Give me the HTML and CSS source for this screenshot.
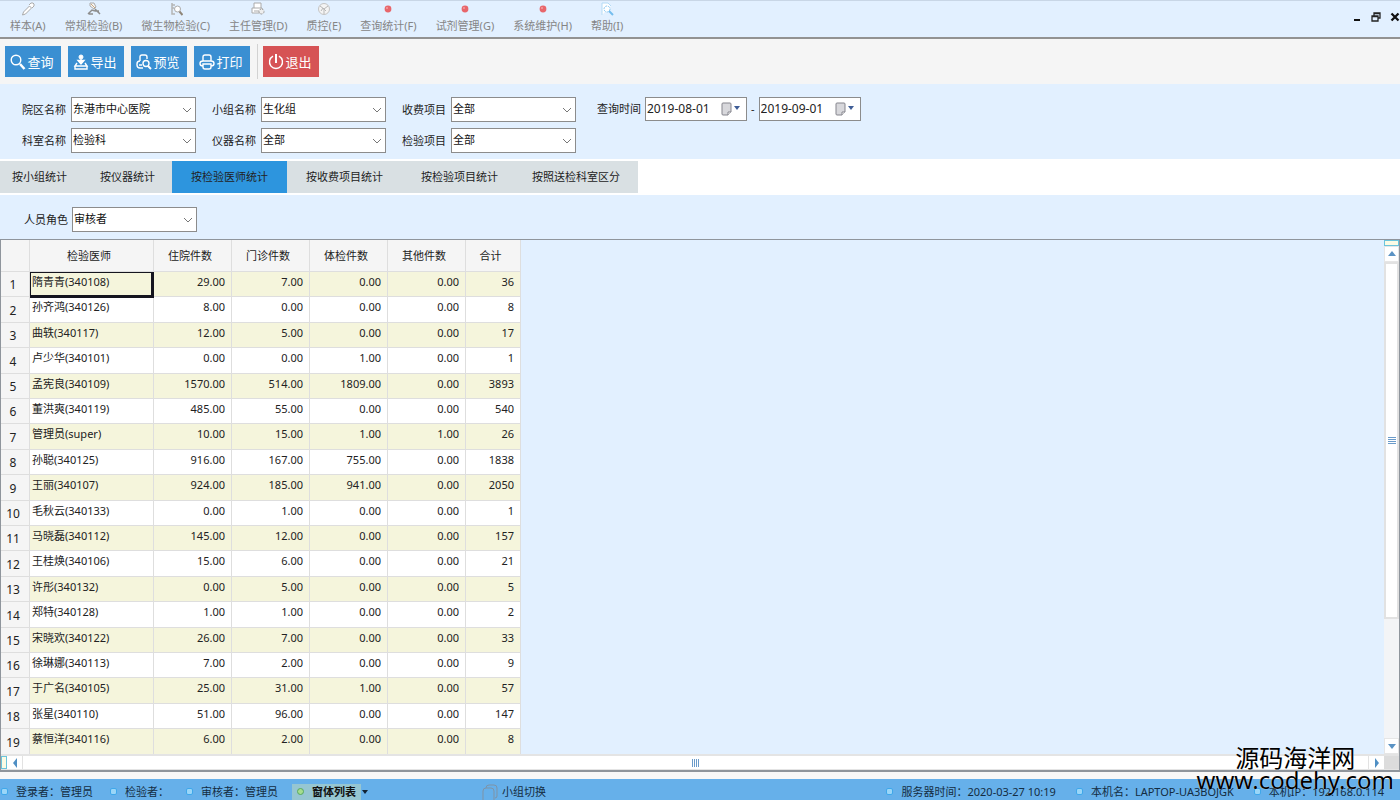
FILE: index.html
```html
<!DOCTYPE html>
<html lang="zh-CN">
<head>
<meta charset="utf-8">
<title>按检验医师统计</title>
<link rel="stylesheet" href="styles.css">
</head>
<body>
<header class="menubar">
  <nav class="menu">
    <button class="menu-item"><svg class="menu-icon" viewBox="0 0 14 14"><path d="M1.500 13l1-3 6-6 2 2-6 6zM8 3l2-2h2l1 1v2l-2 2" fill="#fff" stroke="#aaa"/></svg>样本(A)</button>
    <button class="menu-item"><svg class="menu-icon" viewBox="0 0 14 14"><path d="M3 1h4l2 4-2 2-4-3z" fill="#f6f6f6" stroke="#aaa"/><path d="M1 12l4-4 3 1M2 12h4M8 7l5 5M8 9h4" fill="none" stroke="#8d8d8d" stroke-width="1.500"/><path d="M4 2l4 4" stroke="#c9a77d"/></svg>常规检验(B)</button>
    <button class="menu-item"><svg class="menu-icon" viewBox="0 0 14 14"><path d="M3 1v11h3M3 3h3M3 6h2" fill="none" stroke="#b4b4b4" stroke-width="1.500"/><circle cx="8.500" cy="7" r="3" fill="#fff" stroke="#aaa"/><path d="M10.500 9.500l3 3.500" stroke="#8f8578" stroke-width="2"/></svg>微生物检验(C)</button>
    <button class="menu-item"><svg class="menu-icon" viewBox="0 0 14 14"><path d="M3 6V1h7v5M1 6h10v5H1zM3 9h5" fill="#fff" stroke="#aaa"/><circle cx="10.500" cy="9.500" r="2.500" fill="#eee" stroke="#999" stroke-dasharray="2 1"/></svg>主任管理(D)</button>
    <button class="menu-item"><svg class="menu-icon" viewBox="0 0 14 14"><circle cx="7" cy="7" r="5.500" fill="#f4f4f4" stroke="#c4c4c4"/><path d="M3 4l4 3 4-3M7 7v5M4 9l2-3 3 3" fill="none" stroke="#b8b8b8"/></svg>质控(E)</button>
    <button class="menu-item"><svg class="menu-icon" viewBox="0 0 14 14"><circle cx="7" cy="7" r="3.400" fill="#e8666b"/><circle cx="6" cy="6" r="1" fill="#f3a0a0"/></svg>查询统计(F)</button>
    <button class="menu-item"><svg class="menu-icon" viewBox="0 0 14 14"><circle cx="7" cy="7" r="3.400" fill="#e8666b"/><circle cx="6" cy="6" r="1" fill="#f3a0a0"/></svg>试剂管理(G)</button>
    <button class="menu-item"><svg class="menu-icon" viewBox="0 0 14 14"><circle cx="7" cy="7" r="3.400" fill="#e8666b"/><circle cx="6" cy="6" r="1" fill="#f3a0a0"/></svg>系统维护(H)</button>
    <button class="menu-item"><svg class="menu-icon" viewBox="0 0 14 14"><path d="M2 13V1h6l3 3" fill="#fff" stroke="#b4dbf5"/><circle cx="7" cy="7" r="3" fill="#fff" stroke="#8ac8f0" stroke-dasharray="2 1"/><path d="M9 9l4 4" stroke="#74bdee" stroke-width="2"/></svg>帮助(I)</button>
  </nav>
  <div class="window-controls">
    <button class="win-btn" aria-label="最小化"><svg viewBox="0 0 10 10"><path d="M2 8h6" stroke="#111" stroke-width="2"/></svg></button>
    <button class="win-btn" aria-label="还原"><svg viewBox="0 0 10 10"><path d="M3 3.500V1h6v5H7M3 1.500h6M1 4h6v5H1zM1 4.500h6" fill="none" stroke="#222" stroke-width="1.300"/></svg></button>
    <button class="win-btn" aria-label="关闭"><svg viewBox="0 0 10 10"><path d="M1.500 1.500l7 7M8.500 1.500l-7 7" stroke="#111" stroke-width="2.300"/></svg></button>
  </div>
</header>

<div class="toolbar">
  <button class="tool"><svg class="tool-icon" viewBox="0 0 16 16"><circle cx="6" cy="6" r="4.800"/><path d="M10 10l4.500 5" stroke-width="2.500"/></svg>查询</button>
  <button class="tool"><svg class="tool-icon" viewBox="0 0 16 16"><circle cx="8" cy="3" r="2" fill="#fff" stroke-width="1"/><path d="M8 5v5M5 6.500h6L8 10z" fill="#fff"/><path d="M4 9l-2 3h12l-2-3M2 12v3h12v-3z"/></svg>导出</button>
  <button class="tool"><svg class="tool-icon" viewBox="0 0 16 16"><path d="M4 7V3q0-2 2-2h3q2 0 2 2v2M4 7Q1 7 1 10v1q0 3 3 3h3M3 11h3"/><circle cx="10" cy="9.500" r="3"/><path d="M12 12l3 3" stroke-width="2"/></svg>预览</button>
  <button class="tool"><svg class="tool-icon" viewBox="0 0 16 16"><path d="M4 7V3q0-2 2-2h4q2 0 2 2v4M4 12q-3 0-3-2.500T4 7h8q3 0 3 2.500T12 12M4 10h8v3q0 2-2 2H6q-2 0-2-2z"/></svg>打印</button>
  <span class="tool-sep"></span>
  <button class="tool tool-exit"><svg class="tool-icon" viewBox="0 0 16 16"><path d="M5 2.200a6.500 6.500 0 1 0 6 0"/><path d="M8 0v9" stroke-width="2"/></svg>退出</button>
</div>

<form class="filters">
  <div class="field-grid">
    <div class="field"><label for="f1">院区名称</label><span class="combo"><select id="f1"><option>东港市中心医院</option></select><svg class="chev" viewBox="0 0 10 6"><path d="M1 1l4 4 4-4"/></svg></span></div>
    <div class="field"><label for="f2">小组名称</label><span class="combo"><select id="f2"><option>生化组</option></select><svg class="chev" viewBox="0 0 10 6"><path d="M1 1l4 4 4-4"/></svg></span></div>
    <div class="field"><label for="f3">收费项目</label><span class="combo"><select id="f3"><option>全部</option></select><svg class="chev" viewBox="0 0 10 6"><path d="M1 1l4 4 4-4"/></svg></span></div>
    <div class="field"><label for="f4">科室名称</label><span class="combo"><select id="f4"><option>检验科</option></select><svg class="chev" viewBox="0 0 10 6"><path d="M1 1l4 4 4-4"/></svg></span></div>
    <div class="field"><label for="f5">仪器名称</label><span class="combo"><select id="f5"><option>全部</option></select><svg class="chev" viewBox="0 0 10 6"><path d="M1 1l4 4 4-4"/></svg></span></div>
    <div class="field"><label for="f6">检验项目</label><span class="combo"><select id="f6"><option>全部</option></select><svg class="chev" viewBox="0 0 10 6"><path d="M1 1l4 4 4-4"/></svg></span></div>
  </div>
  <div class="dates">
    <label for="d1">查询时间</label>
    <span class="date"><input id="d1" type="text" value="2019-08-01"><button type="button" class="date-btn" aria-label="选择开始日期"><svg viewBox="0 0 22 14"><path d="M3 1h7q1 0 1 1v8l-3 3H3q-1 0-1-1V2q0-1 1-1z" fill="#d8d8dc" stroke="#85858d"/><path d="M11 10H8v3" fill="#fff" stroke="#85858d"/><path d="M14 4h6l-3 4z" fill="#3f5d96"/></svg></button></span>
    <span class="dash">-</span>
    <span class="date"><input id="d2" type="text" value="2019-09-01" aria-label="结束日期"><button type="button" class="date-btn" aria-label="选择结束日期"><svg viewBox="0 0 22 14"><path d="M3 1h7q1 0 1 1v8l-3 3H3q-1 0-1-1V2q0-1 1-1z" fill="#d8d8dc" stroke="#85858d"/><path d="M11 10H8v3" fill="#fff" stroke="#85858d"/><path d="M14 4h6l-3 4z" fill="#3f5d96"/></svg></button></span>
  </div>
</form>

<nav class="tabs">
  <button class="tab tab-first">按小组统计</button>
  <button class="tab">按仪器统计</button>
  <button class="tab tab-wide tab-active">按检验医师统计</button>
  <button class="tab tab-wide">按收费项目统计</button>
  <button class="tab tab-wide">按检验项目统计</button>
  <button class="tab tab-last">按照送检科室区分</button>
</nav>

<div class="role">
  <label for="role">人员角色</label><span class="combo"><select id="role"><option>审核者</option></select><svg class="chev" viewBox="0 0 10 6"><path d="M1 1l4 4 4-4"/></svg></span>
</div>

<main class="sheet">
  <div class="sheet-body">
    <div class="sheet-view">
      <table class="grid">
        <colgroup><col class="c-no"><col class="c-name"><col class="c-num"><col class="c-num"><col class="c-num"><col class="c-num"><col class="c-sum"></colgroup>
        <thead><tr><th></th><th>检验医师</th><th>住院件数</th><th>门诊件数</th><th>体检件数</th><th>其他件数</th><th>合计</th></tr></thead>
        <tbody>
          <tr><th>1</th><td class="selected">隋青青(340108)</td><td>29.00</td><td>7.00</td><td>0.00</td><td>0.00</td><td>36</td></tr>
          <tr><th>2</th><td>孙齐鸿(340126)</td><td>8.00</td><td>0.00</td><td>0.00</td><td>0.00</td><td>8</td></tr>
          <tr><th>3</th><td>曲轶(340117)</td><td>12.00</td><td>5.00</td><td>0.00</td><td>0.00</td><td>17</td></tr>
          <tr><th>4</th><td>卢少华(340101)</td><td>0.00</td><td>0.00</td><td>1.00</td><td>0.00</td><td>1</td></tr>
          <tr><th>5</th><td>孟宪良(340109)</td><td>1570.00</td><td>514.00</td><td>1809.00</td><td>0.00</td><td>3893</td></tr>
          <tr><th>6</th><td>董洪爽(340119)</td><td>485.00</td><td>55.00</td><td>0.00</td><td>0.00</td><td>540</td></tr>
          <tr><th>7</th><td>管理员(super)</td><td>10.00</td><td>15.00</td><td>1.00</td><td>1.00</td><td>26</td></tr>
          <tr><th>8</th><td>孙聪(340125)</td><td>916.00</td><td>167.00</td><td>755.00</td><td>0.00</td><td>1838</td></tr>
          <tr><th>9</th><td>王丽(340107)</td><td>924.00</td><td>185.00</td><td>941.00</td><td>0.00</td><td>2050</td></tr>
          <tr><th>10</th><td>毛秋云(340133)</td><td>0.00</td><td>1.00</td><td>0.00</td><td>0.00</td><td>1</td></tr>
          <tr><th>11</th><td>马晓磊(340112)</td><td>145.00</td><td>12.00</td><td>0.00</td><td>0.00</td><td>157</td></tr>
          <tr><th>12</th><td>王桂焕(340106)</td><td>15.00</td><td>6.00</td><td>0.00</td><td>0.00</td><td>21</td></tr>
          <tr><th>13</th><td>许彤(340132)</td><td>0.00</td><td>5.00</td><td>0.00</td><td>0.00</td><td>5</td></tr>
          <tr><th>14</th><td>郑特(340128)</td><td>1.00</td><td>1.00</td><td>0.00</td><td>0.00</td><td>2</td></tr>
          <tr><th>15</th><td>宋晓欢(340122)</td><td>26.00</td><td>7.00</td><td>0.00</td><td>0.00</td><td>33</td></tr>
          <tr><th>16</th><td>徐琳娜(340113)</td><td>7.00</td><td>2.00</td><td>0.00</td><td>0.00</td><td>9</td></tr>
          <tr><th>17</th><td>于广名(340105)</td><td>25.00</td><td>31.00</td><td>1.00</td><td>0.00</td><td>57</td></tr>
          <tr><th>18</th><td>张星(340110)</td><td>51.00</td><td>96.00</td><td>0.00</td><td>0.00</td><td>147</td></tr>
          <tr><th>19</th><td>蔡恒洋(340116)</td><td>6.00</td><td>2.00</td><td>0.00</td><td>0.00</td><td>8</td></tr>
        </tbody>
      </table>
    </div>
    <div class="vscroll">
      <span class="split-v"></span>
      <button class="arrow-v" aria-label="向上"><svg viewBox="0 0 8 6"><path d="M0 5l4-5 4 5z" fill="#5b93c4"/></svg></button>
      <div class="track-v"><div class="thumb-v"><svg class="grip" viewBox="0 0 8 8"><path d="M0 0.500h8M0 2.500h8M0 4.500h8M0 6.500h8" stroke="#6a9bca"/></svg></div></div>
      <button class="arrow-v" aria-label="向下"><svg viewBox="0 0 8 6"><path d="M0 1l4 5 4-5z" fill="#5b93c4"/></svg></button>
    </div>
  </div>
  <div class="hscroll">
    <span class="split-h"></span>
    <button class="arrow-h" aria-label="向左"><svg viewBox="0 0 6 10"><path d="M5 0L1 5l4 5z" fill="#4f8fc4"/></svg></button>
    <div class="thumb-h"><svg class="grip" viewBox="0 0 8 8"><path d="M0.500 0v8M2.500 0v8M4.500 0v8M6.500 0v8" stroke="#6a9bca"/></svg></div>
    <button class="arrow-h" aria-label="向右"><svg viewBox="0 0 6 10"><path d="M1 0l4 5-4 5z" fill="#4f8fc4"/></svg></button>
    <span class="corner"></span>
  </div>
</main>

<footer class="statusbar">
  <div class="status-left">
    <span class="status"><i class="dot"></i>登录者：管理员</span>
    <span class="status"><i class="dot"></i>检验者：</span>
    <span class="status"><i class="dot"></i>审核者：管理员</span>
  </div>
  <button class="forms"><i class="dot dot-green"></i>窗体列表</button>
  <svg class="caret" viewBox="0 0 6 4"><path d="M0 0h6L3 4z" fill="#123"/></svg>
  <button class="switch"><svg class="switch-icon" viewBox="0 0 16 16"><path d="M4 4q0-3 3-3h5q3 0 3 3v8q0 2-2 2M1 16V7q0-3 3-3h5q3 0 3 3v9" fill="none" stroke="#7f93a6"/></svg>小组切换</button>
  <div class="status-right">
    <span class="status"><i class="dot"></i>服务器时间：2020-03-27 10:19</span>
    <span class="status"><i class="dot"></i>本机名：LAPTOP-UA3BOJGK</span>
    <span class="status"><i class="dot"></i>本机IP：192.168.0.114</span>
  </div>
</footer>

<div class="watermark"><span>源码海洋网</span><span>www.codehy.com</span></div>
</body>
</html>
```

FILE: styles.css
```css
* { box-sizing: border-box; }

body {
  margin: 0;
  height: 100vh;
  display: flex;
  flex-direction: column;
  overflow: hidden;
  background: #fff;
  color: #222;
  font: 11px/16px "Noto Sans", "Noto Sans CJK SC", sans-serif;
}

button, select, input { font: inherit; color: inherit; }
button { margin: 0; padding: 0; border: 0; background: none; }
svg { display: block; flex: none; }

/* menu bar */
.menubar {
  display: flex;
  justify-content: space-between;
  height: 39px;
  border-top: 1px solid #c8d6e6;
  border-bottom: 2px solid #929292;
  background: #e2f0ff;
}
.menu { display: flex; gap: 19px; padding-left: 10px; }
.menu-item {
  display: flex;
  flex-direction: column;
  align-items: center;
  gap: 2px;
  padding-top: 1px;
  color: #858585;
  white-space: nowrap;
}
.menu-icon { width: 14px; height: 14px; }
.window-controls { display: flex; align-items: flex-start; gap: 9px; padding-top: 11px; }
.win-btn { width: 10px; }
.win-btn svg { width: 10px; height: 10px; }

/* toolbar */
.toolbar {
  display: flex;
  align-items: center;
  gap: 7px;
  height: 45px;
  padding-left: 5px;
  background: #f5f5f5;
}
.tool {
  display: flex;
  align-items: center;
  justify-content: center;
  gap: 1px;
  width: 56px;
  height: 31px;
  padding-right: 2px;
  background: #3a8fd2;
  color: #fff;
  font-size: 13px;
}
.tool-icon { width: 16px; height: 16px; fill: none; stroke: #fff; stroke-width: 1.4; }
.tool-sep { width: 1px; height: 35px; margin-right: -2px; background: #d2d2d2; }
.tool-exit { background: #d65355; }

/* filters */
.filters {
  display: flex;
  gap: 21px;
  padding: 13px 22px 6px;
  background: #e2f0ff;
}
.field-grid {
  display: grid;
  grid-template-columns: repeat(3, max-content);
  gap: 6px 16px;
}
.field { display: flex; align-items: center; gap: 5px; }
.combo { display: grid; align-items: center; width: 125px; }
.combo select {
  grid-area: 1 / 1;
  width: 100%;
  height: 25px;
  padding: 0 0 1px 1px;
  appearance: none;
  border: 1px solid #8c8c8c;
  border-radius: 0;
  background: #fff;
  color: #111;
}
.chev {
  grid-area: 1 / 1;
  justify-self: end;
  width: 10px;
  height: 6px;
  margin-right: 4px;
  fill: none;
  stroke: #777;
  pointer-events: none;
}
.dates { display: flex; align-items: center; align-self: flex-start; height: 24px; }
.date {
  display: flex;
  align-items: center;
  width: 102px;
  height: 24px;
  margin-left: 4px;
  border: 1px solid #8c8c8c;
  background: #fff;
  font-size: 12px;
}
.date input { width: 74px; padding: 0 0 0 1px; border: 0; background: none; outline: 0; }
.date-btn svg { width: 22px; height: 14px; }
.dash { margin-left: 4px; }

/* tabs */
.tabs { display: flex; padding: 2px 0; background: #fff; }
.tab { height: 32px; padding: 0 17px; background: #d9e0e3; white-space: nowrap; }
.tab-first { padding: 0 16px 0 12px; }
.tab-wide { padding: 0 19px; }
.tab-last { padding: 0 18px 0 15px; }
.tab-active { background: #2d95de; }

.role {
  display: flex;
  align-items: center;
  gap: 4px;
  height: 44px;
  padding: 5px 0 0 24px;
  background: #e2f0ff;
}

/* result sheet */
.sheet {
  display: flex;
  flex: 1;
  flex-direction: column;
  min-height: 0;
  border: solid #8f959c;
  border-width: 1px 1px 2px;
  background: #e2f0ff;
}
.sheet-body { display: flex; flex: 1; min-height: 0; }
.sheet-view { flex: 1; overflow: hidden; }
.grid { width: 520px; table-layout: fixed; border-collapse: separate; border-spacing: 0; background: #fff; }
.c-no { width: 29px; }
.c-name { width: 124px; }
.c-num { width: 78px; }
.c-sum { width: 55px; }
.grid th, .grid td { border: solid #dedede; border-width: 0 1px 1px 0; font-weight: 400; }
.grid thead th { height: 32px; padding: 0 5px 0 0; background: #f5f5f5; }
.grid tbody th { padding: 2px 4px 0 0; background: #f5f5f5; font-size: 12px; line-height: 16px; }
.grid tbody td { padding: 2px 6px 0 0; text-align: right; vertical-align: top; white-space: nowrap; }
.grid tbody td:nth-child(2) { padding-left: 2px; text-align: left; }
.grid tbody tr { height: 25px; }
.grid tbody tr:nth-child(5n+2), .grid tbody tr:nth-child(5n+4) { height: 26px; }
.grid tbody tr:nth-child(odd) { background: #f5f5dc; }
.selected { position: relative; }
.selected::after {
  content: "";
  position: absolute;
  inset: 0 -1px -2px 0;
  border: solid #15151f;
  border-width: 1px 3px 3px 1px;
}

/* scroll bars */
.vscroll { display: flex; flex-direction: column; width: 15px; background: #f3f4f6; }
.split-v { height: 6px; border: 1px solid #6cc4dc; background: #fbfbe4; }
.arrow-v { display: grid; place-items: center; height: 16px; border: 1px solid #e6e6e6; background: #fff; }
.arrow-v svg { width: 8px; height: 6px; }
.track-v { flex: 1; }
.thumb-v { display: grid; place-items: center; height: 75%; border: 2px solid #e2e2e2; background: #fff; }
.grip { width: 8px; height: 8px; }
.hscroll { display: flex; height: 16px; border: solid #e4e4e4; border-width: 2px 0 1px; background: #fff; }
.split-h { width: 6px; border: 1px solid #6cc4dc; background: #fbfbe4; }
.arrow-h { display: grid; place-items: center; width: 15px; }
.arrow-h svg { width: 6px; height: 10px; }
.thumb-h { display: grid; flex: 1; place-items: center; border: solid #e2e2e2; border-width: 0 1px; }
.corner { width: 15px; background: #dcdcdc; }

/* status bar */
.statusbar {
  display: flex;
  align-items: center;
  height: 28px;
  padding: 4px 16px 0 1px;
  border-top: 7px solid #f8f8f8;
  background: #66b0ea;
  color: #142d42;
  white-space: nowrap;
}
.status, .forms, .switch { display: flex; align-items: center; }
.status-left { display: flex; gap: 17px; }
.status-right { display: flex; gap: 20px; margin-left: auto; }
.dot {
  width: 7px;
  height: 7px;
  margin-right: 8px;
  border: 1px solid #3fa7ea;
  border-radius: 2px;
  background: #9ad6f8;
}
.dot-green { border-color: #56a860; border-radius: 4px; background: #a5dd8f; }
.forms { height: 16px; margin-left: 14px; padding: 0 5px; background: #96c6d2; color: #111; font-weight: 700; }
.caret { width: 6px; height: 4px; margin-left: 1px; }
.switch { gap: 4px; margin-left: 114px; }
.switch-icon { width: 16px; height: 16px; }

.watermark {
  position: absolute;
  right: 6px;
  bottom: 9px;
  display: flex;
  flex-direction: column;
  align-items: center;
  color: #000;
  font-size: 24px;
  line-height: 22px;
  text-shadow: 0 0 1px #fff;
  pointer-events: none;
}
```
